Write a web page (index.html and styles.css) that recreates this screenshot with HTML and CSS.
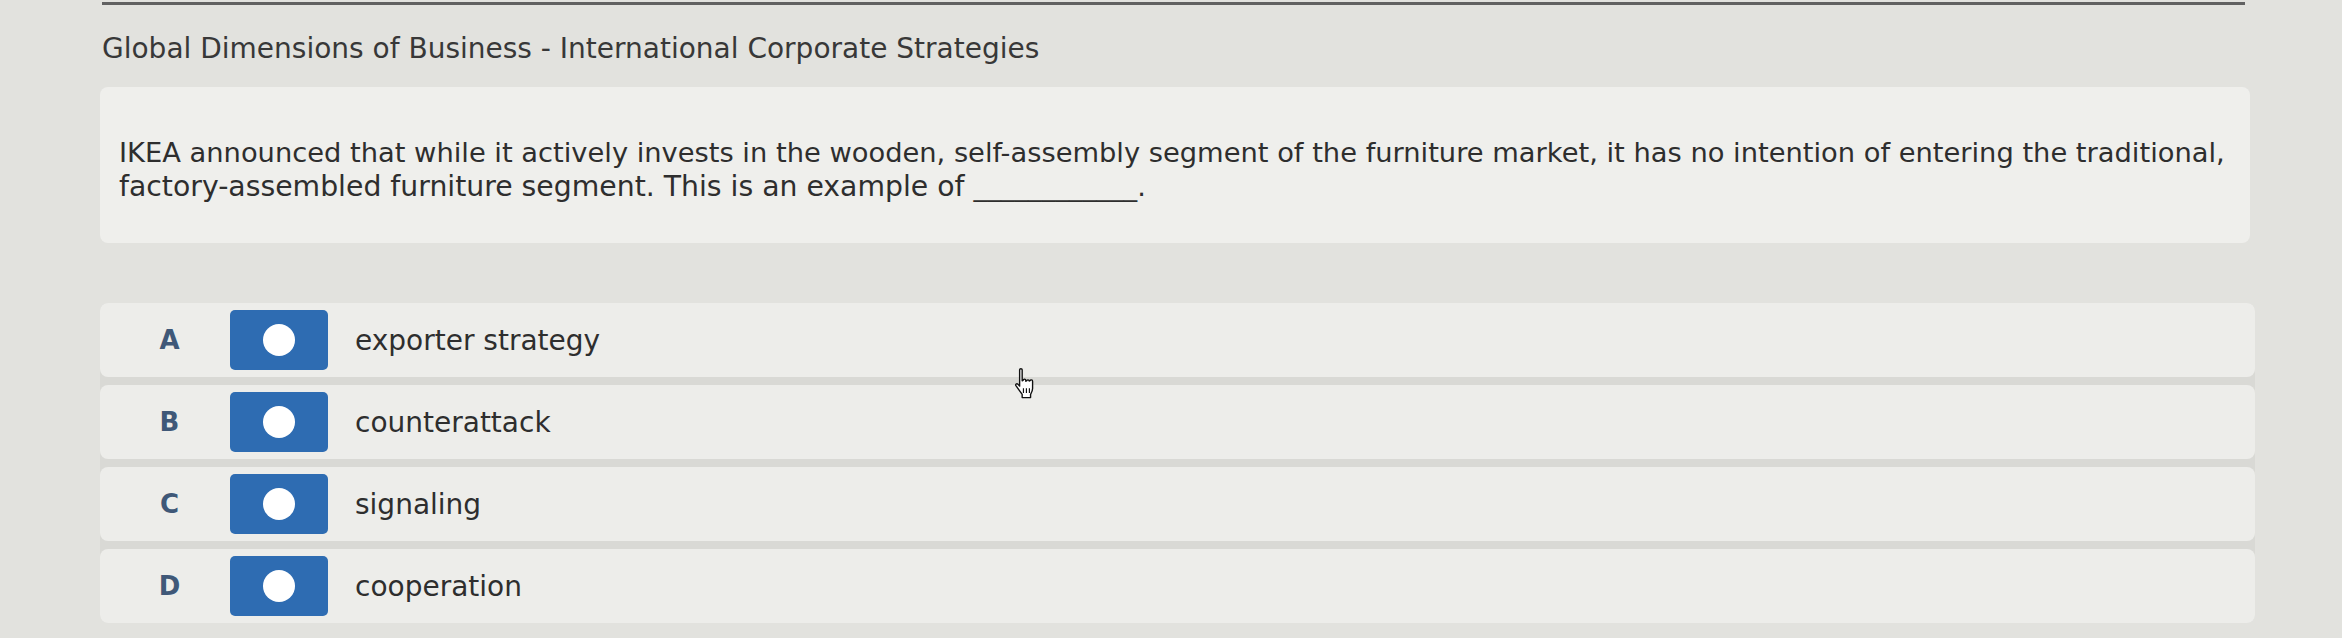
FILE: index.html
```html
<!DOCTYPE html>
<html lang="en">
<head>
<meta charset="utf-8">
<title>Global Dimensions of Business - International Corporate Strategies</title>
<link rel="stylesheet" href="styles.css">
</head>
<body>
<div class="page">
  <div class="rule"></div>
  <h1 class="title">Global Dimensions of Business - International Corporate Strategies</h1>
  <div class="question">
    <p class="qtext">IKEA announced that while it actively invests in the wooden, self-assembly segment of the furniture market, it has no intention of entering the traditional,<br><span class="line2">factory-assembled furniture segment. This is an example of </span><span class="blank">____________</span>.</p>
  </div>
  <div class="options">
    <div class="option">
      <span class="letter">A</span>
      <span class="radio"><span class="dot"></span></span>
      <span class="label">exporter strategy</span>
    </div>
    <div class="option">
      <span class="letter">B</span>
      <span class="radio"><span class="dot"></span></span>
      <span class="label">counterattack</span>
    </div>
    <div class="option">
      <span class="letter">C</span>
      <span class="radio"><span class="dot"></span></span>
      <span class="label">signaling</span>
    </div>
    <div class="option">
      <span class="letter">D</span>
      <span class="radio"><span class="dot"></span></span>
      <span class="label">cooperation</span>
    </div>
  </div>
  <svg class="cursor" width="28" height="34" viewBox="0 0 26 32">
    <path d="M7 2.5c0-1.2 2.4-1.2 2.4 0v10.5l1-.6c0-1.3 2.4-1.3 2.4 0v1l.8-.4c.2-1.2 2.4-1.2 2.4.2l.8-.3c.3-1.1 2.4-1 2.4.4v7c0 2.3-1.2 4.3-1.9 5.5v3H9.4v-3L3.5 17.6c-.7-1.2.7-2.4 1.8-1.5L7 18V2.5z" fill="#fff" stroke="#111" stroke-width="1.3" stroke-linejoin="round"/>
    <path d="M10.6 20v4.5M13.4 20v4.5M16.2 20v4.5" stroke="#111" stroke-width="1.1"/>
  </svg>
</div>
</body>
</html>
```

FILE: styles.css
```css
html, body {
  margin: 0;
  padding: 0;
}
body {
  background: #e2e2de;
  font-family: "DejaVu Sans", Verdana, sans-serif;
  color: #333;
  width: 2342px;
  height: 638px;
  overflow: hidden;
}
.page {
  position: relative;
  padding: 2px 0 0 100px;
  width: 2160px;
}
.rule {
  margin-left: 2px;
  width: 2143px;
  height: 3px;
  background: #616161;
}
.title {
  margin: 28px 0 0 2px;
  font-size: 28px;
  font-weight: normal;
  line-height: 32px;
  color: #383838;
}
.question {
  margin-top: 22px;
  width: 2150px;
  height: 156px;
  box-sizing: border-box;
  padding: 49px 0 0 19px;
  background: #efefec;
  border-radius: 8px;
}
.qtext {
  margin: 0;
  font-size: 27.3px;
  line-height: 34px;
  white-space: nowrap;
  color: #2e2e2e;
}
.line2 {
  font-size: 28.3px;
}
.options {
  margin-top: 60px;
  display: flex;
  flex-direction: column;
  gap: 8px;
  width: 2155px;
  background: #d9d9d5;
  border-radius: 8px;
}
.option {
  height: 74px;
  display: flex;
  align-items: center;
  background: #ededea;
  border-radius: 8px;
}
.letter {
  margin-left: 9px;
  width: 121px;
  text-align: center;
  font-size: 26px;
  font-weight: bold;
  color: #3f5878;
}
.radio {
  width: 98px;
  height: 60px;
  background: #2e6cb2;
  border-radius: 5px;
  display: flex;
  align-items: center;
  justify-content: center;
}
.dot {
  width: 32px;
  height: 32px;
  border-radius: 50%;
  background: #fff;
}
.label {
  margin-left: 27px;
  font-size: 28px;
  color: #2e2e2e;
}
.cursor {
  position: absolute;
  left: 1012px;
  top: 367px;
}
```
